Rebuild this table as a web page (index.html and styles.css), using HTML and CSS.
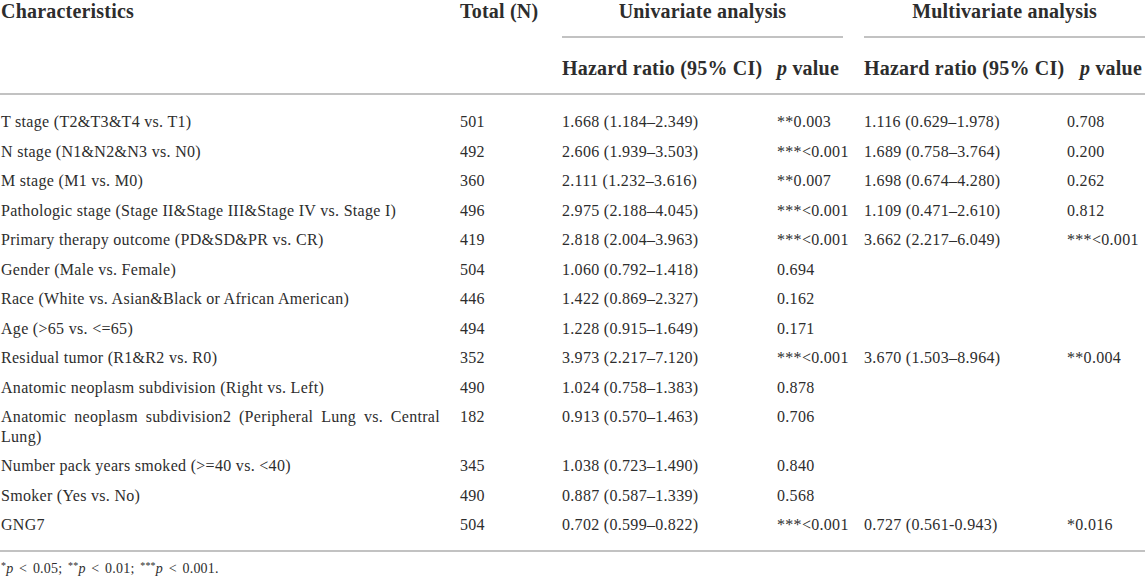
FILE: index.html
```html
<!DOCTYPE html>
<html lang="en">
<head>
    <meta charset="UTF-8" />
    <meta name="viewport" content="width=device-width, initial-scale=1.0" />
    <title>Cox regression – GNG7</title>
    <link rel="stylesheet" href="styles.css">
</head>
<body>
  <table class="results">
    <colgroup>
      <col class="c-char">
      <col class="c-total">
      <col class="c-uni-hr">
      <col class="c-uni-p">
      <col class="c-multi-hr">
      <col class="c-multi-p">
    </colgroup>
    <thead>
      <tr class="group-row">
        <th rowspan="2" class="first">Characteristics</th>
        <th rowspan="2">Total (N)</th>
        <th colspan="2" class="group uni"><div class="group-label">Univariate analysis</div></th>
        <th colspan="2" class="group multi"><div class="group-label">Multivariate analysis</div></th>
      </tr>
      <tr class="sub-row">
        <th>Hazard ratio (95% CI)</th>
        <th><i>p</i> value</th>
        <th>Hazard ratio (95% CI)</th>
        <th class="last-p"><i>p</i> value</th>
      </tr>
    </thead>
    <tbody>
      <tr>
        <td class="first">T stage (T2&amp;T3&amp;T4 vs. T1)</td>
        <td>501</td><td>1.668 (1.184–2.349)</td><td>**0.003</td>
        <td>1.116 (0.629–1.978)</td><td>0.708</td>
      </tr>
      <tr>
        <td class="first">N stage (N1&amp;N2&amp;N3 vs. N0)</td>
        <td>492</td><td>2.606 (1.939–3.503)</td><td>***&lt;0.001</td>
        <td>1.689 (0.758–3.764)</td><td>0.200</td>
      </tr>
      <tr>
        <td class="first">M stage (M1 vs. M0)</td>
        <td>360</td><td>2.111 (1.232–3.616)</td><td>**0.007</td>
        <td>1.698 (0.674–4.280)</td><td>0.262</td>
      </tr>
      <tr>
        <td class="first">Pathologic stage (Stage II&amp;Stage III&amp;Stage IV vs. Stage I)</td>
        <td>496</td><td>2.975 (2.188–4.045)</td><td>***&lt;0.001</td>
        <td>1.109 (0.471–2.610)</td><td>0.812</td>
      </tr>
      <tr>
        <td class="first">Primary therapy outcome (PD&amp;SD&amp;PR vs. CR)</td>
        <td>419</td><td>2.818 (2.004–3.963)</td><td>***&lt;0.001</td>
        <td>3.662 (2.217–6.049)</td><td>***&lt;0.001</td>
      </tr>
      <tr>
        <td class="first">Gender (Male vs. Female)</td>
        <td>504</td><td>1.060 (0.792–1.418)</td><td>0.694</td>
        <td></td><td></td>
      </tr>
      <tr>
        <td class="first">Race (White vs. Asian&amp;Black or African American)</td>
        <td>446</td><td>1.422 (0.869–2.327)</td><td>0.162</td>
        <td></td><td></td>
      </tr>
      <tr>
        <td class="first">Age (&gt;65 vs. &lt;=65)</td>
        <td>494</td><td>1.228 (0.915–1.649)</td><td>0.171</td>
        <td></td><td></td>
      </tr>
      <tr>
        <td class="first">Residual tumor (R1&amp;R2 vs. R0)</td>
        <td>352</td><td>3.973 (2.217–7.120)</td><td>***&lt;0.001</td>
        <td>3.670 (1.503–8.964)</td><td>**0.004</td>
      </tr>
      <tr>
        <td class="first">Anatomic neoplasm subdivision (Right vs. Left)</td>
        <td>490</td><td>1.024 (0.758–1.383)</td><td>0.878</td>
        <td></td><td></td>
      </tr>
      <tr>
        <td class="first">Anatomic neoplasm subdivision2 (Peripheral Lung vs. Central Lung)</td>
        <td>182</td><td>0.913 (0.570–1.463)</td><td>0.706</td>
        <td></td><td></td>
      </tr>
      <tr>
        <td class="first">Number pack years smoked (&gt;=40 vs. &lt;40)</td>
        <td>345</td><td>1.038 (0.723–1.490)</td><td>0.840</td>
        <td></td><td></td>
      </tr>
      <tr>
        <td class="first">Smoker (Yes vs. No)</td>
        <td>490</td><td>0.887 (0.587–1.339)</td><td>0.568</td>
        <td></td><td></td>
      </tr>
      <tr>
        <td class="first">GNG7</td>
        <td>504</td><td>0.702 (0.599–0.822)</td><td>***&lt;0.001</td>
        <td>0.727 (0.561-0.943)</td><td>*0.016</td>
      </tr>
    </tbody>
    <tfoot>
      <tr>
        <td colspan="6" class="first note">
          <sup>*</sup><i>p</i> &lt; 0.05; <sup>**</sup><i>p</i> &lt; 0.01; <sup>***</sup><i>p</i> &lt; 0.001.
        </td>
      </tr>
    </tfoot>
  </table>
</body>
</html>
```

FILE: styles.css
```css
html,
body {
    margin: 0;
    background: #ffffff;
}

body {
    font-family: "Liberation Serif", "Times New Roman", Times, serif;
    color: #2d2d2d;
    overflow: hidden;
}

.results {
    width: 1145px;
    border-collapse: collapse;
    table-layout: fixed;
}

/* column widths, text starts 10px inside each */
.c-char     { width: 450px; }
.c-total    { width: 102px; }
.c-uni-hr   { width: 215px; }
.c-uni-p    { width: 87px; }
.c-multi-hr { width: 203px; }
.c-multi-p  { width: 88px; }

.results thead {
    border-bottom: 2px solid #c2c2c2;
}

.results th {
    font-size: 20px;
    line-height: 22px;
    font-weight: bold;
    letter-spacing: 0.2px;
    text-align: left;
    vertical-align: top;
    white-space: nowrap;
    padding: 0 0 0 10px;
}

    .results th.first,
    .results td.first {
        padding-left: 1px;
    }

    .results th.last-p {
        padding-left: 23px;
    }

.group.uni {
    padding-right: 11px;
}

.group-label {
    text-align: center;
    padding-bottom: 14px;
    border-bottom: 2px solid #c2c2c2;
}

.sub-row th {
    padding-top: 19px;
    padding-bottom: 14px;
}

.results td {
    font-size: 16px;
    line-height: 19.5px;
    letter-spacing: 0.3px;
    vertical-align: top;
    white-space: nowrap;
    padding: 5px 0 5px 10px;
}

    .results td.first {
        white-space: normal;
        padding-right: 10px;
        text-align: justify;
    }

.results tbody tr:first-child td {
    padding-top: 17px;
}

.results tbody tr:last-child td {
    padding-bottom: 15px;
}

.results tfoot {
    border-top: 2px solid #c2c2c2;
}

    .results tfoot td.note {
        font-size: 14px;
        line-height: 17px;
        letter-spacing: 0.2px;
        word-spacing: 2px;
        padding-top: 8px;
        padding-bottom: 0;
    }

.note sup {
    font-size: 10px;
    line-height: 0;
    vertical-align: 4px;
}
```
